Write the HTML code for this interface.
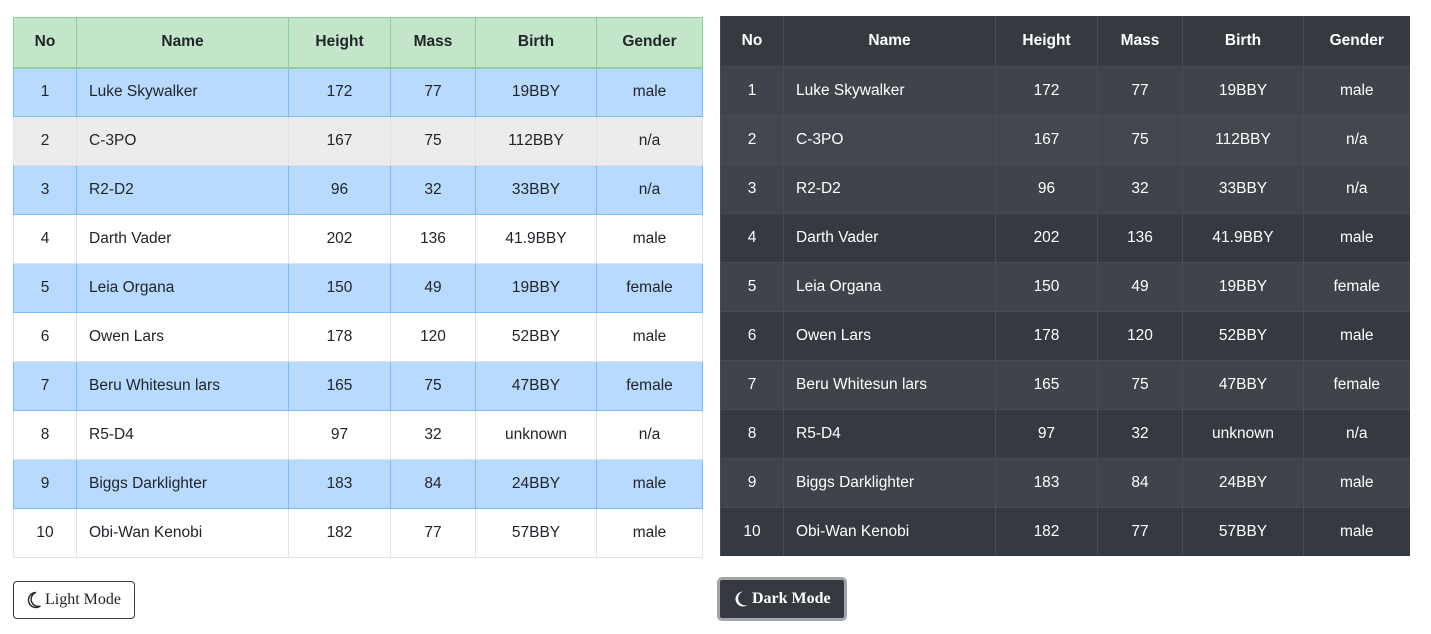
<!DOCTYPE html>
<html><head><style>
body{margin:0;background:#fff;font-family:"Liberation Sans",sans-serif;font-size:15.5px;color:#212529}
table{position:absolute;border-collapse:collapse;table-layout:fixed;width:689px}
td,th{text-align:center;padding:0;border:1px solid #dee2e6}
tr{height:49px}
tr:first-child{height:50px}
th{font-weight:bold}
td.n{text-align:left;padding-left:12px}
#l{left:13px;top:17px}
#l th{background:#c3e6cb;border-color:#8fd19e;border-bottom-width:2px}
#l tr.p td{background:#b8daff;border-color:#7abaff}
#l tr.g td{background:#ececec}
#d{left:720px;top:16px;background:#343a40;color:#fff}
#d td,#d th{border:none;border-top:1px solid #454d55;border-left:1px solid #454d55}
#d tr.o td{background:#3e444a}
#d tr.h td{background:#43484f}
#d th{border-top:none}
.b{position:absolute;font-family:"Liberation Serif",serif;font-size:16px;display:flex;align-items:center;gap:3px;box-sizing:border-box;border-radius:4px}
</style></head><body>
<table id="l"><colgroup><col style="width:63px"><col style="width:212px"><col style="width:102px"><col style="width:85px"><col style="width:121px"><col style="width:106px"></colgroup>
<tr><th>No</th><th>Name</th><th>Height</th><th>Mass</th><th>Birth</th><th>Gender</th></tr>
<tr class="p"><td>1</td><td class="n">Luke Skywalker</td><td>172</td><td>77</td><td>19BBY</td><td>male</td></tr>
<tr class="g"><td>2</td><td class="n">C-3PO</td><td>167</td><td>75</td><td>112BBY</td><td>n/a</td></tr>
<tr class="p"><td>3</td><td class="n">R2-D2</td><td>96</td><td>32</td><td>33BBY</td><td>n/a</td></tr>
<tr><td>4</td><td class="n">Darth Vader</td><td>202</td><td>136</td><td>41.9BBY</td><td>male</td></tr>
<tr class="p"><td>5</td><td class="n">Leia Organa</td><td>150</td><td>49</td><td>19BBY</td><td>female</td></tr>
<tr><td>6</td><td class="n">Owen Lars</td><td>178</td><td>120</td><td>52BBY</td><td>male</td></tr>
<tr class="p"><td>7</td><td class="n">Beru Whitesun lars</td><td>165</td><td>75</td><td>47BBY</td><td>female</td></tr>
<tr><td>8</td><td class="n">R5-D4</td><td>97</td><td>32</td><td>unknown</td><td>n/a</td></tr>
<tr class="p"><td>9</td><td class="n">Biggs Darklighter</td><td>183</td><td>84</td><td>24BBY</td><td>male</td></tr>
<tr><td>10</td><td class="n">Obi-Wan Kenobi</td><td>182</td><td>77</td><td>57BBY</td><td>male</td></tr>
</table>
<table id="d"><colgroup><col style="width:63px"><col style="width:212px"><col style="width:102px"><col style="width:85px"><col style="width:121px"><col style="width:106px"></colgroup>
<tr><th>No</th><th>Name</th><th>Height</th><th>Mass</th><th>Birth</th><th>Gender</th></tr>
<tr class="o"><td>1</td><td class="n">Luke Skywalker</td><td>172</td><td>77</td><td>19BBY</td><td>male</td></tr>
<tr class="h"><td>2</td><td class="n">C-3PO</td><td>167</td><td>75</td><td>112BBY</td><td>n/a</td></tr>
<tr class="o"><td>3</td><td class="n">R2-D2</td><td>96</td><td>32</td><td>33BBY</td><td>n/a</td></tr>
<tr><td>4</td><td class="n">Darth Vader</td><td>202</td><td>136</td><td>41.9BBY</td><td>male</td></tr>
<tr class="o"><td>5</td><td class="n">Leia Organa</td><td>150</td><td>49</td><td>19BBY</td><td>female</td></tr>
<tr><td>6</td><td class="n">Owen Lars</td><td>178</td><td>120</td><td>52BBY</td><td>male</td></tr>
<tr class="o"><td>7</td><td class="n">Beru Whitesun lars</td><td>165</td><td>75</td><td>47BBY</td><td>female</td></tr>
<tr><td>8</td><td class="n">R5-D4</td><td>97</td><td>32</td><td>unknown</td><td>n/a</td></tr>
<tr class="o"><td>9</td><td class="n">Biggs Darklighter</td><td>183</td><td>84</td><td>24BBY</td><td>male</td></tr>
<tr><td>10</td><td class="n">Obi-Wan Kenobi</td><td>182</td><td>77</td><td>57BBY</td><td>male</td></tr>
</table>
<div class="b" style="left:13px;top:581px;width:122px;height:38px;border:1px solid #343a40;padding-left:12px">
<svg width="16" height="18" viewBox="0 0 16 18"><path d="M10 1.5A7.5 7.5 0 1 0 14.5 15 6.2 6.2 0 0 1 10 1.5Z" fill="none" stroke="#212529" stroke-width="1.4"/></svg>Light Mode</div>
<div class="b" style="left:717px;top:577px;width:130px;height:44px;background:#343a40;color:#fff;border:3px solid #a3a6a9;border-radius:5px;padding-left:13px;font-weight:bold">
<svg width="16" height="18" viewBox="0 0 16 18"><path d="M10 1.5A7.5 7.5 0 1 0 14.5 15 6.2 6.2 0 0 1 10 1.5Z" fill="#fff"/></svg>Dark Mode</div>
</body></html>
